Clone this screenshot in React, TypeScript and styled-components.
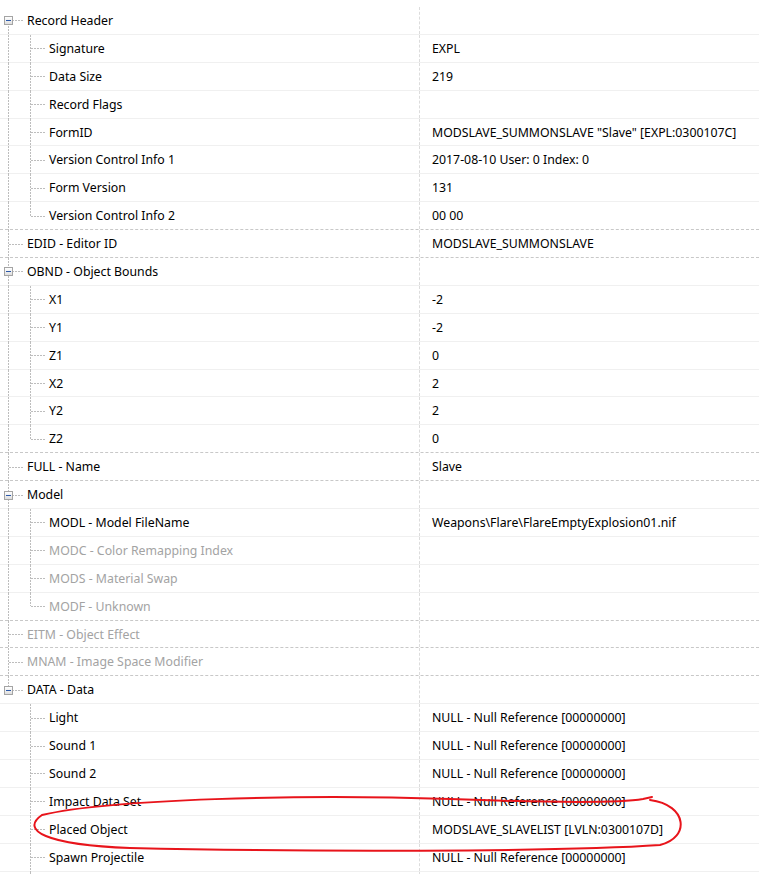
import React from 'react'
import styled, { createGlobalStyle, css } from 'styled-components'

const GlobalStyle = createGlobalStyle`
html, body {
  margin: 0;
  padding: 0;
  background: #ffffff;
}
body {
  font-family: "Noto Sans", "Open Sans", sans-serif;
  font-size: 12.3px;
  color: #000000;
  overflow: hidden;
}
`

const INDENT = 22
const ROW_H = 27.9
const LINE = '#bdbdbd'

const dottedV = css`
  background-image: repeating-linear-gradient(to bottom, ${LINE} 0 2px, transparent 2px 3px);
  background-repeat: no-repeat;
`
const dottedH = css`
  background-image: repeating-linear-gradient(to right, ${LINE} 0 2px, transparent 2px 3px);
  background-repeat: no-repeat;
`

const Wrapper = styled.div`
  position: relative;
  width: 759px;
  height: 874px;
  overflow: hidden;
  padding-top: 7px;
  box-sizing: border-box;
`

const Row = styled.div<{ $dashed: boolean }>`
  display: grid;
  grid-template-columns: 420px 1fr;
  height: ${ROW_H}px;
  box-sizing: border-box;
  border-bottom: 1px ${p => (p.$dashed ? 'dashed #c8c8c8' : 'solid #f0f0f0')};
`

const NameCell = styled.div`
  display: flex;
  align-items: stretch;
  height: 100%;
  border-right: 1px dashed #dcdcdc;
  box-sizing: border-box;
  white-space: nowrap;
`

const Guide = styled.span<{ $show: boolean }>`
  position: relative;
  flex: 0 0 ${INDENT}px;
  &::before {
    content: '';
    display: ${p => (p.$show ? 'block' : 'none')};
    position: absolute;
    left: 8px;
    top: 0;
    bottom: -1px;
    width: 1px;
    ${dottedV}
  }
`

// the elbow joining a node to its parent's guide line
const Branch = styled.span<{ $last: boolean; $first: boolean }>`
  position: relative;
  flex: 0 0 26px;
  &::before {
    content: '';
    position: absolute;
    left: 8px;
    top: ${p => (p.$first ? '50%' : '0')};
    height: ${p => (p.$last ? (p.$first ? '0' : '50%') : 'calc(100% + 1px)')};
    width: 1px;
    ${dottedV}
  }
  &::after {
    content: '';
    position: absolute;
    left: 9px;
    top: 50%;
    width: 15px;
    height: 1px;
    ${dottedH}
  }
`

const ExpandBox = styled.span`
  position: absolute;
  left: 4px;
  top: 50%;
  margin-top: -4px;
  width: 9px;
  height: 9px;
  box-sizing: border-box;
  border: 1px solid #a4a4a4;
  background: linear-gradient(#ffffff, #dedede);
  z-index: 1;
  &::after {
    content: '';
    position: absolute;
    left: 1px;
    top: 3px;
    width: 5px;
    height: 1px;
    background: #2b58a8;
  }
`

const Label = styled.span<{ $dim: boolean }>`
  display: flex;
  align-items: center;
  padding-left: 1px;
  color: ${p => (p.$dim ? '#a3a3a3' : '#000000')};
`

const ValueCell = styled.div`
  display: flex;
  align-items: center;
  padding-left: 12px;
  white-space: nowrap;
`

const Annotation = styled.svg`
  position: absolute;
  left: 0;
  top: 0;
  pointer-events: none;
`

type Node = {
  label: string
  value?: string
  level: 0 | 1
  open?: boolean
  dim?: boolean
  more?: boolean
}

const nodes: Node[] = [
  { label: 'Record Header', level: 0, open: true },
  { label: 'Signature', value: 'EXPL', level: 1 },
  { label: 'Data Size', value: '219', level: 1 },
  { label: 'Record Flags', level: 1 },
  { label: 'FormID', value: 'MODSLAVE_SUMMONSLAVE "Slave" [EXPL:0300107C]', level: 1 },
  { label: 'Version Control Info 1', value: '2017-08-10 User: 0 Index: 0', level: 1 },
  { label: 'Form Version', value: '131', level: 1 },
  { label: 'Version Control Info 2', value: '00 00', level: 1 },
  { label: 'EDID - Editor ID', value: 'MODSLAVE_SUMMONSLAVE', level: 0 },
  { label: 'OBND - Object Bounds', level: 0, open: true },
  { label: 'X1', value: '-2', level: 1 },
  { label: 'Y1', value: '-2', level: 1 },
  { label: 'Z1', value: '0', level: 1 },
  { label: 'X2', value: '2', level: 1 },
  { label: 'Y2', value: '2', level: 1 },
  { label: 'Z2', value: '0', level: 1 },
  { label: 'FULL - Name', value: 'Slave', level: 0 },
  { label: 'Model', level: 0, open: true },
  { label: 'MODL - Model FileName', value: 'Weapons\\Flare\\FlareEmptyExplosion01.nif', level: 1 },
  { label: 'MODC - Color Remapping Index', level: 1, dim: true },
  { label: 'MODS - Material Swap', level: 1, dim: true },
  { label: 'MODF - Unknown', level: 1, dim: true },
  { label: 'EITM - Object Effect', level: 0, dim: true },
  { label: 'MNAM - Image Space Modifier', level: 0, dim: true },
  { label: 'DATA - Data', level: 0, open: true },
  { label: 'Light', value: 'NULL - Null Reference [00000000]', level: 1 },
  { label: 'Sound 1', value: 'NULL - Null Reference [00000000]', level: 1 },
  { label: 'Sound 2', value: 'NULL - Null Reference [00000000]', level: 1 },
  { label: 'Impact Data Set', value: 'NULL - Null Reference [00000000]', level: 1 },
  { label: 'Placed Object', value: 'MODSLAVE_SLAVELIST [LVLN:0300107D]', level: 1 },
  // the DATA struct goes on below the fold
  { label: 'Spawn Projectile', value: 'NULL - Null Reference [00000000]', level: 1, more: true },
]

// is this the last sibling at its level (looking down until the parent level closes)?
const isLastSibling = (i: number) => {
  const lvl = nodes[i].level
  if (nodes[i].more) return false
  for (let j = i + 1; j < nodes.length; j++) {
    if (nodes[j].level === lvl) return false
    if (nodes[j].level < lvl) return true
  }
  return lvl === 0
}

// does the top level line still run past this row?
const topLineContinues = (i: number) => {
  for (let j = i; j >= 0; j--) {
    if (nodes[j].level === 0) return !isLastSibling(j)
  }
  return false
}

const TreeRow = ({ node, index }: { node: Node; index: number }) => {
  const next = nodes[index + 1]
  return (
    <Row $dashed={!!next && next.level === 0}>
      <NameCell>
        {node.level === 1 && <Guide $show={topLineContinues(index)} />}
        <Branch $last={isLastSibling(index)} $first={index === 0}>
          {node.open && <ExpandBox />}
        </Branch>
        <Label $dim={!!node.dim}>{node.label}</Label>
      </NameCell>
      <ValueCell>{node.value}</ValueCell>
    </Row>
  )
}

const TailRow = styled.div`
  display: grid;
  grid-template-columns: 420px 1fr;
  height: 10px;
`

const App = () => {
  return (
    <>
      <GlobalStyle />
      <Wrapper>
        {nodes.map((n, i) => (
          <TreeRow key={i} node={n} index={i} />
        ))}
        <TailRow>
          <NameCell>
            <Guide $show={false} />
            <Guide $show={true} />
          </NameCell>
        </TailRow>
        <Annotation width="759" height="874" viewBox="0 0 759 874">
          <path
            d="M 650 800 C 688 805, 690 838, 660 845 C 560 852, 300 852, 130 848 C 45 845, 20 830, 42 815 C 110 799, 300 794, 450 799 C 560 803, 620 803, 643 799 l 9 -2"
            fill="none"
            stroke="#e8141b"
            strokeWidth="2"
            strokeLinecap="round"
          />
        </Annotation>
      </Wrapper>
    </>
  )
}

export default App
